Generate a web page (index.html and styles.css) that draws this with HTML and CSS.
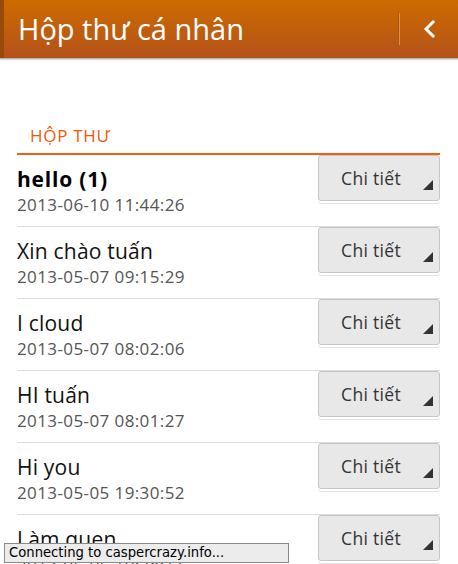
FILE: index.html
```html
<!DOCTYPE html>
<html lang="vi">
<head>
<meta charset="utf-8">
<title>Hộp thư cá nhân</title>
<link rel="stylesheet" href="styles.css">
</head>
<body>
<header class="topbar">
  <h1 class="title">Hộp thư cá nhân</h1>
  <div class="sep"></div>
  <button class="back" aria-label="Quay lại">
    <svg width="14" height="20" viewBox="0 0 14 20"><path d="M11 3 L4 10 L11 17" fill="none" stroke="#fff" stroke-width="3" stroke-linecap="square"/></svg>
  </button>
</header>
<main class="content">
  <h2 class="section">HỘP THƯ</h2>
  <ul class="list">
    <li class="row"><div class="info"><div class="subject unread">hello (1)</div><div class="date">2013-06-10 11:44:26</div></div><button class="detail">Chi tiết</button></li>
    <li class="row"><div class="info"><div class="subject">Xin chào tuấn</div><div class="date">2013-05-07 09:15:29</div></div><button class="detail">Chi tiết</button></li>
    <li class="row"><div class="info"><div class="subject">I cloud</div><div class="date">2013-05-07 08:02:06</div></div><button class="detail">Chi tiết</button></li>
    <li class="row"><div class="info"><div class="subject">HI tuấn</div><div class="date">2013-05-07 08:01:27</div></div><button class="detail">Chi tiết</button></li>
    <li class="row"><div class="info"><div class="subject">Hi you</div><div class="date">2013-05-05 19:30:52</div></div><button class="detail">Chi tiết</button></li>
    <li class="row"><div class="info"><div class="subject">Làm quen</div><div class="date">2013-05-05 19:28:11</div></div><button class="detail">Chi tiết</button></li>
  </ul>
</main>
<div class="status">Connecting to caspercrazy.info...</div>
</body>
</html>
```
FILE: styles.css
```css
html, body { margin: 0; padding: 0; }
body {
  width: 458px;
  height: 564px;
  overflow: hidden;
  background: #fff;
  font-family: "Open Sans", "Noto Sans", sans-serif;
  position: relative;
}
.topbar {
  height: 58px;
  display: flex;
  align-items: center;
  background: linear-gradient(#cd6b00, #b4521a);
  border-left: 4px solid #9a4a08;
  box-shadow: 0 1px 0 #b9b4b0, 0 2px 1px #dcdcdc;
  box-sizing: border-box;
}
.title {
  margin: 0 0 2px 14px;
  flex: 1;
  font-weight: 400;
  font-size: 29px;
  color: #fff;
  letter-spacing: 0;
}
.sep {
  width: 1px;
  height: 32px;
  background: #e0904a;
  box-shadow: -1px 0 0 #b5560c;
}
.back {
  width: 58px;
  height: 58px;
  border: 0;
  background: transparent;
  display: flex;
  align-items: center;
  justify-content: center;
  padding: 0;
}
.content {
  padding: 66px 18px 0 17px;
}
.section {
  margin: 0;
  padding: 0 0 6px 13px;
  font-size: 17px;
  font-weight: 400;
  letter-spacing: 0.7px;
  color: #f05a0a;
  border-bottom: 2px solid #f06010;
  line-height: 23px;
}
.list { list-style: none; margin: 0; padding: 0; }
.row {
  height: 71px;
  border-bottom: 1px solid #dcdcdc;
  display: flex;
  justify-content: space-between;
  align-items: flex-start;
}
.info { padding-top: 11px; }
.subject {
  font-size: 21px;
  line-height: 27px;
  letter-spacing: 0.2px;
  color: #111;
}
.subject.unread { font-weight: 700; color: #000; letter-spacing: 0.8px; }
.date {
  font-size: 17px;
  line-height: 24px;
  letter-spacing: 0.4px;
  color: #555;
}
.detail {
  position: relative;
  margin-top: 0;
  width: 122px;
  height: 46px;
  border: 1px solid #c6c6c6;
  border-radius: 3px;
  background: #e8e8e8;
  box-shadow: 0 2px 0 #fff, 0 3px 0 #e2e2e2;
  font-family: inherit;
  font-size: 17.5px;
  letter-spacing: 0.3px;
  color: #333;
  padding: 0 16px 0 0;
}
.detail::after {
  content: "";
  position: absolute;
  right: 6px;
  bottom: 10px;
  border-left: 10px solid transparent;
  border-bottom: 10px solid #333;
}
.status {
  position: absolute;
  left: 4px;
  top: 543px;
  width: 279px;
  height: 18px;
  border: 1px solid #8a8a8a;
  background: #ececec;
  font-family: "DejaVu Sans", sans-serif;
  font-size: 13.2px;
  line-height: 18px;
  padding-left: 4px;
  box-sizing: content-box;
  color: #000;
}
```
